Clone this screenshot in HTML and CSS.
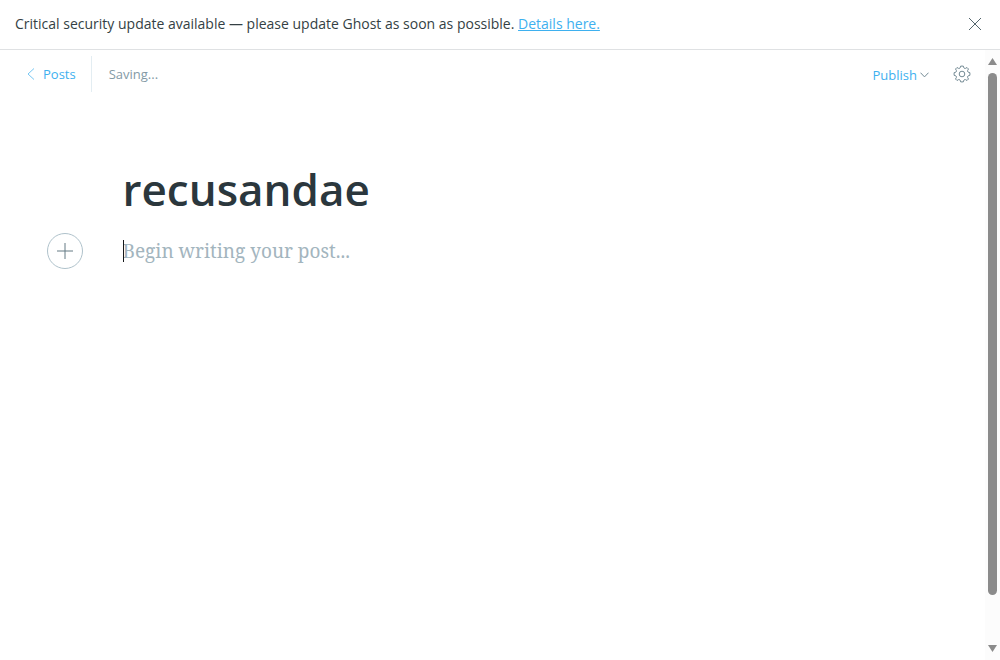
FILE: index.html
```
<!DOCTYPE html>
<html lang="en">
<head>
<meta charset="utf-8">
<meta name="viewport" content="width=device-width, initial-scale=1">
<title>Editor - Ghost</title>
<link rel="stylesheet" href="styles.css">
</head>
<body>
<div class="app">
  <aside class="alert">
    <p class="alert-text">Critical security update available — please update Ghost as soon as possible. <a class="alert-link" href="#">Details here.</a></p>
    <button class="icon-button alert-close" type="button" aria-label="Close">
      <svg width="14" height="14" viewBox="0 0 14 14"><path d="M1 1l12 12M13 1L1 13"/></svg>
    </button>
  </aside>
  <div class="viewport">
    <main class="editor">
      <header class="toolbar">
        <a class="back" href="#">
          <svg class="back-icon" width="8" height="12" viewBox="0 0 8 12"><path d="M7 .5L1 6l6 5.500"/></svg>
          Posts
        </a>
        <span class="status">Saving...</span>
        <div class="actions">
          <button class="publish" type="button">Publish
            <svg width="9" height="6" viewBox="0 0 9 6"><path d="M.5 .7l4 4.200 4-4.200"/></svg>
          </button>
          <button class="icon-button settings" type="button" aria-label="Settings">
            <svg width="18" height="18" viewBox="-9 -9 18 18"><path d="M-1.300 -7.900H1.300L2 -6Q2.600 -5.200 3.500 -5.600L5 -6.500L6.500 -5L5.600 -3.500Q5.200 -2.600 6 -2L7.900 -1.300V1.300L6 2Q5.200 2.600 5.600 3.500L6.500 5L5 6.500L3.500 5.600Q2.600 5.200 2 6L1.300 7.900H-1.300L-2 6Q-2.600 5.200 -3.500 5.600L-5 6.500L-6.500 5L-5.600 3.500Q-5.200 2.600 -6 2L-7.900 1.300V-1.300L-6 -2Q-5.200 -2.600 -5.600 -3.500L-6.500 -5L-5 -6.500L-3.500 -5.600Q-2.600 -5.200 -2 -6Z"/><circle r="2.800"/></svg>
          </button>
        </div>
      </header>
      <section class="post">
        <input class="post-title" type="text" value="recusandae" aria-label="Post title">
        <div class="post-body">
          <button class="add-card" type="button" aria-label="Add a card">
            <svg width="16" height="16" viewBox="0 0 16 16"><path d="M8 0v16M0 8h16"/></svg>
          </button>
          <span class="caret"></span>
          <textarea class="post-text" rows="1" placeholder="Begin writing your post..." aria-label="Post content"></textarea>
        </div>
      </section>
    </main>
    <div class="scrollbar" aria-hidden="true">
      <svg width="9" height="7" viewBox="0 0 9 7"><path d="M4.500 0L9 7H0z"/></svg>
      <div class="track"><div class="thumb"></div></div>
      <svg width="9" height="7" viewBox="0 0 9 7"><path d="M4.500 7L9 0H0z"/></svg>
    </div>
  </div>
</div>
</body>
</html>
```
FILE: styles.css
```
* { box-sizing: border-box; }

body {
  margin: 0;
  background: #fff;
  color: #343f44;
  font-family: "Segoe UI", "Open Sans", "Noto Sans", sans-serif;
  font-size: 13px;
  line-height: 20px;
}

button, input, textarea {
  margin: 0;
  padding: 0;
  border: 0;
  background: none;
  font: inherit;
  outline: 0;
}

button { cursor: pointer; }

svg {
  display: block;
  fill: none;
  stroke: currentColor;
}

.app {
  display: flex;
  flex-direction: column;
  height: 100vh;
}

.alert {
  display: flex;
  align-items: center;
  justify-content: space-between;
  padding: 14px 18px 15px 15px;
  border-bottom: 1px solid #dfe1e3;
}

.alert-text {
  margin: 0;
  font-size: 14px;
}

.alert-link { color: #3eb0ef; }

.icon-button { color: #54666d; }

.viewport {
  display: flex;
  flex: 1;
  min-height: 0;
}

.editor {
  flex: 1;
  min-width: 0;
}

.toolbar {
  display: flex;
  align-items: center;
  padding: 6px 14px 7px 27px;
}

.back {
  display: flex;
  align-items: center;
  gap: 8px;
  height: 36px;
  padding-right: 15px;
  border-right: 1px solid #e3edf2;
  color: #3eb0ef;
  text-decoration: none;
}

.back-icon { opacity: 0.7; }

.status {
  padding-left: 17px;
  color: #839aa6;
}

.actions {
  display: flex;
  align-items: center;
  gap: 24px;
  margin-left: auto;
}

.publish {
  display: flex;
  align-items: center;
  gap: 3px;
  padding-top: 2px;
  color: #3eb0ef;
}

.publish svg,
.settings { color: #738a94; }

.post {
  max-width: 740px;
  margin: 0 auto;
  padding-top: 60px;
}

.post-title {
  display: block;
  width: 100%;
  color: #2b373d;
  font-size: 44px;
  font-weight: 600;
  line-height: 60px;
}

.post-body {
  position: relative;
  padding-top: 16px;
}

.post-text {
  display: block;
  width: 100%;
  height: 32px;
  overflow: hidden;
  resize: none;
  font-family: Georgia, "Noto Serif", "DejaVu Serif", serif;
  font-size: 19px;
  line-height: 32px;
}

.post-text::placeholder {
  color: #a3b5be;
  opacity: 1;
}

.caret {
  position: absolute;
  top: 21px;
  left: 0;
  width: 1px;
  height: 22px;
  background: #15171a;
}

.add-card {
  position: absolute;
  top: 14px;
  left: -76px;
  display: grid;
  place-items: center;
  width: 36px;
  height: 36px;
  border: 1px solid #afc2cb;
  border-radius: 50%;
  color: #657a84;
}

.scrollbar {
  display: flex;
  flex-direction: column;
  align-items: center;
  gap: 8px;
  width: 15px;
  padding: 8px 0;
  background: #fcfcfc;
  color: #8b8b8b;
}

.scrollbar svg {
  fill: currentColor;
  stroke: none;
}

.track { flex: 1; }

.thumb {
  width: 9px;
  height: 92.5%;
  border-radius: 5px;
  background: #8b8b8b;
}
```
